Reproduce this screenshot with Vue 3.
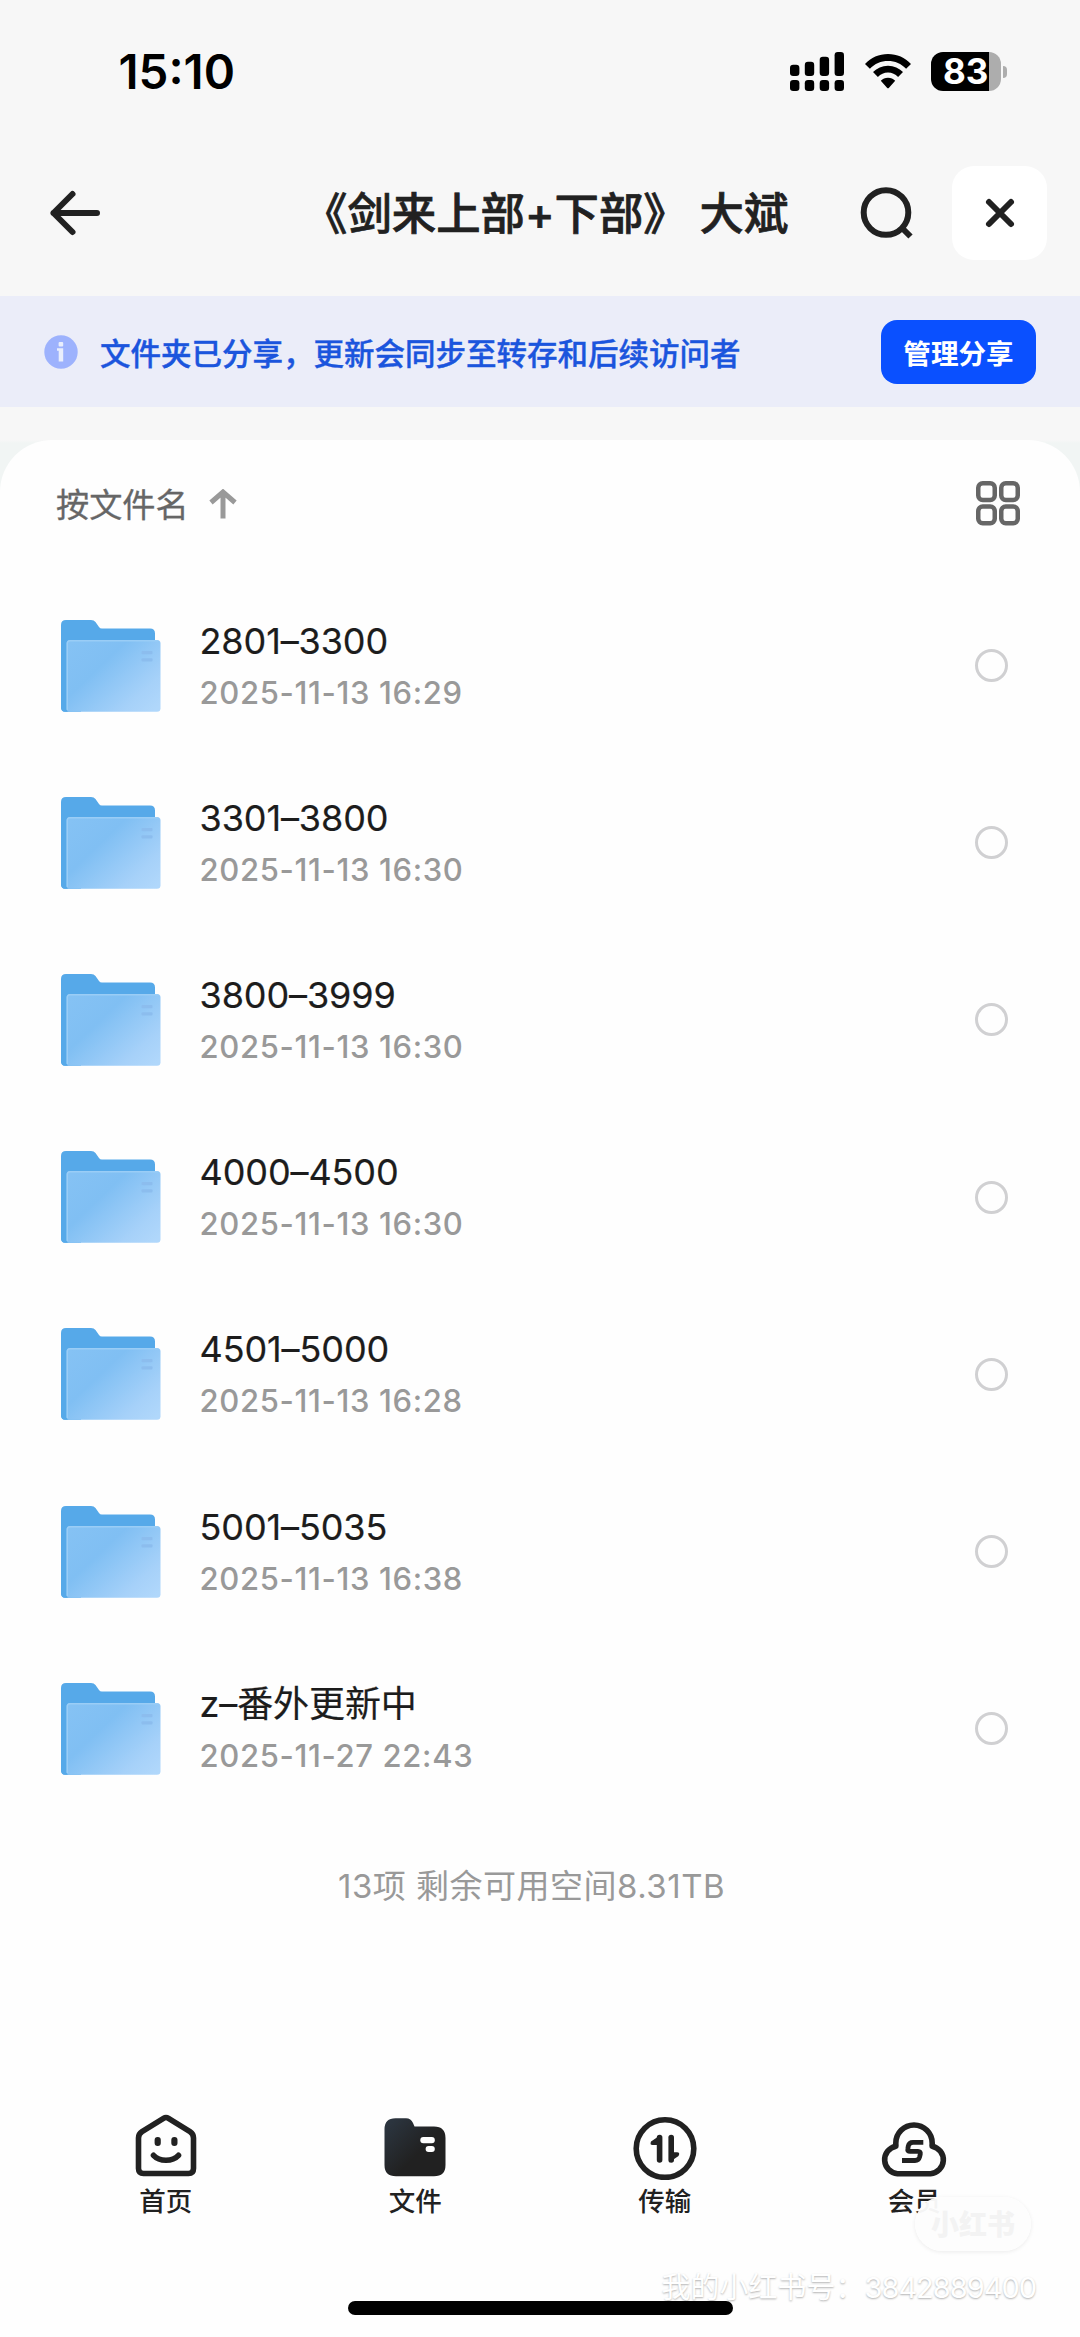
<script setup>
const files = [
  { name: '2801–3300', day: '2025-11-13', time: '16:29' },
  { name: '3301–3800', day: '2025-11-13', time: '16:30' },
  { name: '3800–3999', day: '2025-11-13', time: '16:30' },
  { name: '4000–4500', day: '2025-11-13', time: '16:30' },
  { name: '4501–5000', day: '2025-11-13', time: '16:28' },
  { name: '5001–5035', day: '2025-11-13', time: '16:38' },
  { name: 'z–番外更新中', day: '2025-11-27', time: '22:43' },
]
</script>

<template>
  <div class="screen">
    <header class="status">
      <span class="time">15:10</span>
      <div class="indicators">
        <svg class="signal" width="54" height="39" viewBox="0 0 54 39">
          <rect x="0" y="12.700" width="9.400" height="11.300" rx="3.200" />
          <rect x="14.800" y="9.700" width="9.400" height="14.300" rx="3.200" />
          <rect x="29.700" y="4.700" width="9.400" height="19.300" rx="3.200" />
          <rect x="44.600" y="0" width="9.400" height="24" rx="3.200" />
          <rect x="0" y="28" width="9.400" height="11" rx="3.200" />
          <rect x="14.800" y="28" width="9.400" height="11" rx="3.200" />
          <rect x="29.700" y="28" width="9.400" height="11" rx="3.200" />
          <rect x="44.600" y="28" width="9.400" height="11" rx="3.200" />
        </svg>
        <svg class="wifi" width="46" height="35" viewBox="0 0 46 36" preserveAspectRatio="none">
          <path d="M23 0C14 0 6 3.600 0 10.300L4.900 15.200C9.700 9.800 16 7.100 23 7.100C30 7.100 36.300 9.800 41.100 15.200L46 10.300C40 3.600 32 0 23 0Z" />
          <path d="M23 12C17 12 12 14.300 8 18.600L12.900 23.600C15.700 20.600 19 19 23 19C27 19 30.300 20.600 33.100 23.600L38 18.600C34 14.300 29 12 23 12Z" />
          <path d="M23 24.500C20 24.500 17.800 25.600 15.800 27.600L22 34.700Q23 35.900 24 34.700L30.200 27.600C28.200 25.600 26 24.500 23 24.500Z" />
        </svg>
        <div class="battery">
          <div class="cell"><span>83</span></div>
          <i class="nub"></i>
        </div>
      </div>
    </header>

    <nav class="titlebar">
      <svg class="back" width="52" height="50" viewBox="0 0 52 50">
        <path d="M23.500 6L4.500 25L23.500 44M4.500 25H48" />
      </svg>
      <h1>《剑来上部+下部》 大斌</h1>
      <svg class="search" width="54" height="56" viewBox="0 0 54 56">
        <circle cx="26" cy="27.500" r="22.300" />
        <path d="M42 43L50.500 51.500" />
      </svg>
      <button class="close">
        <svg width="34" height="34" viewBox="0 0 34 34"><path d="M6 6L28 28M28 6L6 28" /></svg>
      </button>
    </nav>

    <section class="banner">
      <svg width="34" height="34" viewBox="0 0 34 34">
        <circle cx="17" cy="17" r="16.700" fill="#9db2fd" />
        <rect x="14.600" y="7" width="4.600" height="4.600" rx="1" fill="#e9eefc" />
        <path d="M13 13.300H19.200V26.500H14.700V15.700H13Z" fill="#e9eefc" />
      </svg>
      <p>文件夹已分享，更新会同步至转存和后续访问者</p>
      <button>管理分享</button>
    </section>

    <div class="panel-wrap">
      <main class="panel">
        <div class="sort">
          <span>按文件名</span>
          <svg class="up" width="28" height="30" viewBox="0 0 28 30">
            <path d="M14 29.500V4M2 13.500L14 3L26 13.500" />
          </svg>
          <svg class="grid" width="44" height="45" viewBox="0 0 44 45">
            <rect x="2.250" y="2.250" width="16.500" height="16.700" rx="4.500" />
            <rect x="25.250" y="2.250" width="16.500" height="16.700" rx="4.500" />
            <rect x="2.250" y="25.600" width="16.500" height="16.700" rx="4.500" />
            <rect x="25.250" y="25.600" width="16.500" height="16.700" rx="4.500" />
          </svg>
        </div>

        <ul class="list">
          <li v-for="f in files" :key="f.name">
            <svg class="folder" width="100" height="92" viewBox="0 0 100 92">
              <defs>
                <linearGradient id="front" x1="0" y1="0.100" x2="1" y2="0.900">
                  <stop offset="0" stop-color="#85c2f4" />
                  <stop offset="0.350" stop-color="#80bff3" />
                  <stop offset="0.800" stop-color="#a6d1f9" />
                  <stop offset="1" stop-color="#b0d7fb" />
                </linearGradient>
              </defs>
              <path d="M5 0H30Q33 0 34.500 2L38 7Q39 8.500 41 8.500H89Q94 8.500 94 13.500V40L6 91.700H4Q0 91.700 0 87V5Q0 0 5 0Z" fill="#56a9e9" />
              <path d="M0 50H20V91.700H4Q0 91.700 0 87Z" fill="#56a9e9" />
              <rect x="5.500" y="20" width="94" height="71.700" rx="3.500" fill="url(#front)" />
              <path d="M6.300 90V23.500Q6.300 20.700 9 20.700H97" fill="none" stroke="#9acdf6" stroke-width="1.400" />
              <rect x="80.500" y="31" width="11" height="3.200" rx="1" fill="#8cbdee" />
              <rect x="80.500" y="38.300" width="11" height="3.200" rx="1" fill="#8cbdee" />
            </svg>
            <div class="meta">
              <div class="name">{{ f.name }}</div>
              <div class="date"><span class="day">{{ f.day }}</span> {{ f.time }}</div>
            </div>
            <i class="radio"></i>
          </li>
        </ul>

        <p class="summary">13项 剩余可用空间8.31TB</p>
      </main>
    </div>

    <footer class="tabs">
      <div class="tab">
        <svg width="68" height="68" viewBox="0 0 68 68">
          <path d="M31.500 6.300Q34 4.700 36.500 6.300L58 19.700Q61.500 22 61.500 26V56.500Q61.500 61.500 56.500 61.500H11.500Q6.500 61.500 6.500 56.500V26Q6.500 22 10 19.700Z" class="line" />
          <rect x="22.600" y="25" width="6.200" height="9" rx="3" />
          <rect x="39.300" y="25" width="6.200" height="9" rx="3" />
          <path d="M21.500 43.300Q26 48.200 34 48.200T46.500 43.300" class="line" />
        </svg>
        <span>首页</span>
      </div>
      <div class="tab">
        <svg width="68" height="68" viewBox="0 0 68 68">
          <defs>
            <linearGradient id="dark" x1="0.050" y1="0.150" x2="0.550" y2="0.600">
              <stop offset="0" stop-color="#2b343e" />
              <stop offset="1" stop-color="#212121" />
            </linearGradient>
          </defs>
          <path d="M14.500 6.300H25Q30 6.300 32 11L33.500 14.500H53Q64.500 14.500 64.500 26V53Q64.500 64.300 53 64.300H15Q3.500 64.300 3.500 53V17.300Q3.500 6.300 14.500 6.300Z" fill="url(#dark)" />
          <rect x="39.300" y="25" width="14.500" height="6.300" rx="3" fill="#fff" />
          <rect x="44.600" y="34" width="9.200" height="6" rx="3" fill="#fff" />
        </svg>
        <span>文件</span>
      </div>
      <div class="tab">
        <svg width="68" height="68" viewBox="0 0 68 68">
          <circle cx="34" cy="36.600" r="28.800" class="line" />
          <path d="M28.600 25.500V48" class="line" />
          <path d="M30 22.700L20 29.500Q18.500 33 21.500 33H30Z" />
          <path d="M40.200 25.500V48" class="line" />
          <path d="M38 50.500L47.500 44Q49.500 40.300 46 40.300H40Z" />
        </svg>
        <span>传输</span>
      </div>
      <div class="tab">
        <svg width="68" height="68" viewBox="0 0 68 68">
          <path d="M17.500 61.700A13.900 13.900 0 0 1 15.900 34.200L15.800 31.200A18.200 18.200 0 0 1 52.200 31.200L52.100 34.200A13.900 13.900 0 0 1 50.500 61.700Z" class="line" />
          <path d="M43.300 30.300H33Q29 30.300 28.300 34L27.800 37Q27.300 39.300 30 39.300H38Q40.800 39.300 40.300 42L39.600 45Q38.700 48.500 35 48.500H22" class="bolt" />
        </svg>
        <span>会员</span>
      </div>
    </footer>
    <div class="home-bar"></div>

    <div class="mark-logo">小红书</div>
    <div class="mark-id">我的小红书号：<span>3842889400</span></div>
  </div>
</template>

<style>
body {
  margin: 0;
}
</style>

<style scoped>
.screen {
  position: relative;
  display: flex;
  flex-direction: column;
  width: 1080px;
  height: 2337px;
  overflow: hidden;
  background: #fefefe;
  color: #212121;
  font-family: Inter, "Noto Sans CJK SC", sans-serif;
}
button {
  border: 0;
  padding: 0;
  font-family: inherit;
}
.status {
  display: flex;
  justify-content: space-between;
  align-items: center;
  height: 148px;
  box-sizing: border-box;
  padding: 0 73px 5px 118.500px;
  background: #f7f7f7;
  color: #000;
}
.time {
  font-size: 47.500px;
  font-weight: 600;
}
.indicators {
  display: flex;
  align-items: center;
}
.wifi {
  margin: 0 20px 0 21px;
}
.battery {
  display: flex;
  align-items: center;
}
.cell {
  width: 70px;
  height: 39px;
  border-radius: 12px;
  background: linear-gradient(90deg, #000 58px, #adadad 58px);
  color: #fff;
  font-size: 35px;
  font-weight: 700;
  line-height: 39px;
}
.cell span {
  margin-left: 12px;
}
.nub {
  width: 4px;
  height: 12px;
  margin-left: 2px;
  border-radius: 0 5px 5px 0;
  background: #adadad;
}
.titlebar {
  display: flex;
  align-items: center;
  height: 148px;
  box-sizing: border-box;
  padding: 0 33px 18px 49px;
  background: #f7f7f7;
}
.titlebar path,
.titlebar circle {
  fill: none;
  stroke: #212121;
  stroke-width: 6;
  stroke-linecap: round;
  stroke-linejoin: round;
}
.titlebar .search path {
  stroke-linecap: butt;
}
h1 {
  width: 484px;
  margin: -5px 0 0 202px;
  font-size: 44.400px;
  font-weight: 500;
  white-space: nowrap;
  -webkit-text-stroke: 0.700px #212121;
}
.search {
  margin-left: 73px;
}
.close {
  display: flex;
  align-items: center;
  justify-content: center;
  width: 95px;
  height: 94px;
  margin-left: auto;
  border-radius: 22px;
  background: #fff;
}
.banner {
  display: flex;
  align-items: center;
  height: 111px;
  box-sizing: border-box;
  padding: 0 44px;
  background: #ebedf9;
}
.banner p {
  margin: 0 0 0 22px;
  color: #1b55dd;
  font-size: 30.500px;
  font-weight: 500;
  -webkit-text-stroke: 0.400px #1b55dd;
}
.banner button {
  width: 155px;
  height: 64px;
  margin-left: auto;
  border-radius: 16px;
  background: #0a50ff;
  color: #fff;
  font-size: 27.600px;
  font-weight: 700;
}
.panel-wrap {
  padding-top: 33px;
  background: linear-gradient(#f7f7f7 33px, #f1f5f4 36px);
}
.panel {
  height: 1605px;
  border-radius: 52px 52px 0 0;
  background: #fefefe;
}
.sort {
  display: flex;
  align-items: center;
  height: 137px;
  box-sizing: border-box;
  padding: 0 60.500px 10px 56px;
  color: #666;
  font-size: 33.200px;
}
.sort span {
  margin-top: -2px;
  -webkit-text-stroke: 0.300px #666;
}
.up {
  margin-left: 20px;
  fill: none;
  stroke: #999;
  stroke-width: 5;
}
.grid {
  margin-left: auto;
  fill: none;
  stroke: #666;
  stroke-width: 4.500;
}
.list {
  margin: 0;
  padding: 0;
  list-style: none;
}
.list li {
  display: flex;
  align-items: center;
  height: 177.200px;
  padding: 0 72px 0 61px;
}
.meta {
  margin-left: 38.500px;
}
.name {
  height: 52px;
  color: #1c1c1c;
  font-size: 36px;
  line-height: 52px;
  letter-spacing: -0.100px;
  font-feature-settings: "calt" 0;
  -webkit-text-stroke: 0.200px #1c1c1c;
}
.date {
  height: 50px;
  color: #999;
  font-size: 31px;
  font-weight: 450;
  line-height: 52px;
  letter-spacing: 0.650px;
}
.day {
  font-feature-settings: "calt" 0;
}
.radio {
  width: 27px;
  height: 27px;
  margin-left: auto;
  border: 3px solid #d0d0d2;
  border-radius: 50%;
}
.summary {
  margin: 45px 17px 0 0;
  text-align: center;
  color: #999;
  font-size: 33px;
  line-height: 48px;
  letter-spacing: 0.500px;
}
.tabs {
  display: flex;
  height: 189px;
  padding: 0 41px;
  margin-top: 67px;
}
.tab {
  display: flex;
  flex: 1;
  flex-direction: column;
  align-items: center;
  color: #212121;
  font-size: 26.500px;
  font-weight: 500;
  line-height: 42px;
}
.tab svg {
  fill: #212121;
}
.tab .line {
  fill: none;
  stroke: #212121;
  stroke-width: 5.600;
  stroke-linecap: round;
  stroke-linejoin: round;
}
.tab .bolt {
  fill: none;
  stroke: #212121;
  stroke-width: 4.800;
}
.home-bar {
  width: 385px;
  height: 14px;
  margin-left: 348px;
  border-radius: 7px;
  background: #000;
}
.mark-logo {
  position: absolute;
  left: 915px;
  top: 2197px;
  width: 116px;
  height: 54px;
  border-radius: 27px;
  background: rgba(253, 253, 253, 0.960);
  box-shadow: 0 1px 4px rgba(0, 0, 0, 0.080);
  color: #f3f3f3;
  font-size: 28px;
  font-weight: 900;
  line-height: 56px;
  text-align: center;
}
.mark-id {
  position: absolute;
  right: 44px;
  top: 2267px;
  color: #fff;
  font-size: 29px;
  line-height: 42px;
  text-shadow: 0 1px 2px rgba(0, 0, 0, 0.300);
  white-space: nowrap;
}
.mark-id span {
  letter-spacing: -1px;
}
</style>
